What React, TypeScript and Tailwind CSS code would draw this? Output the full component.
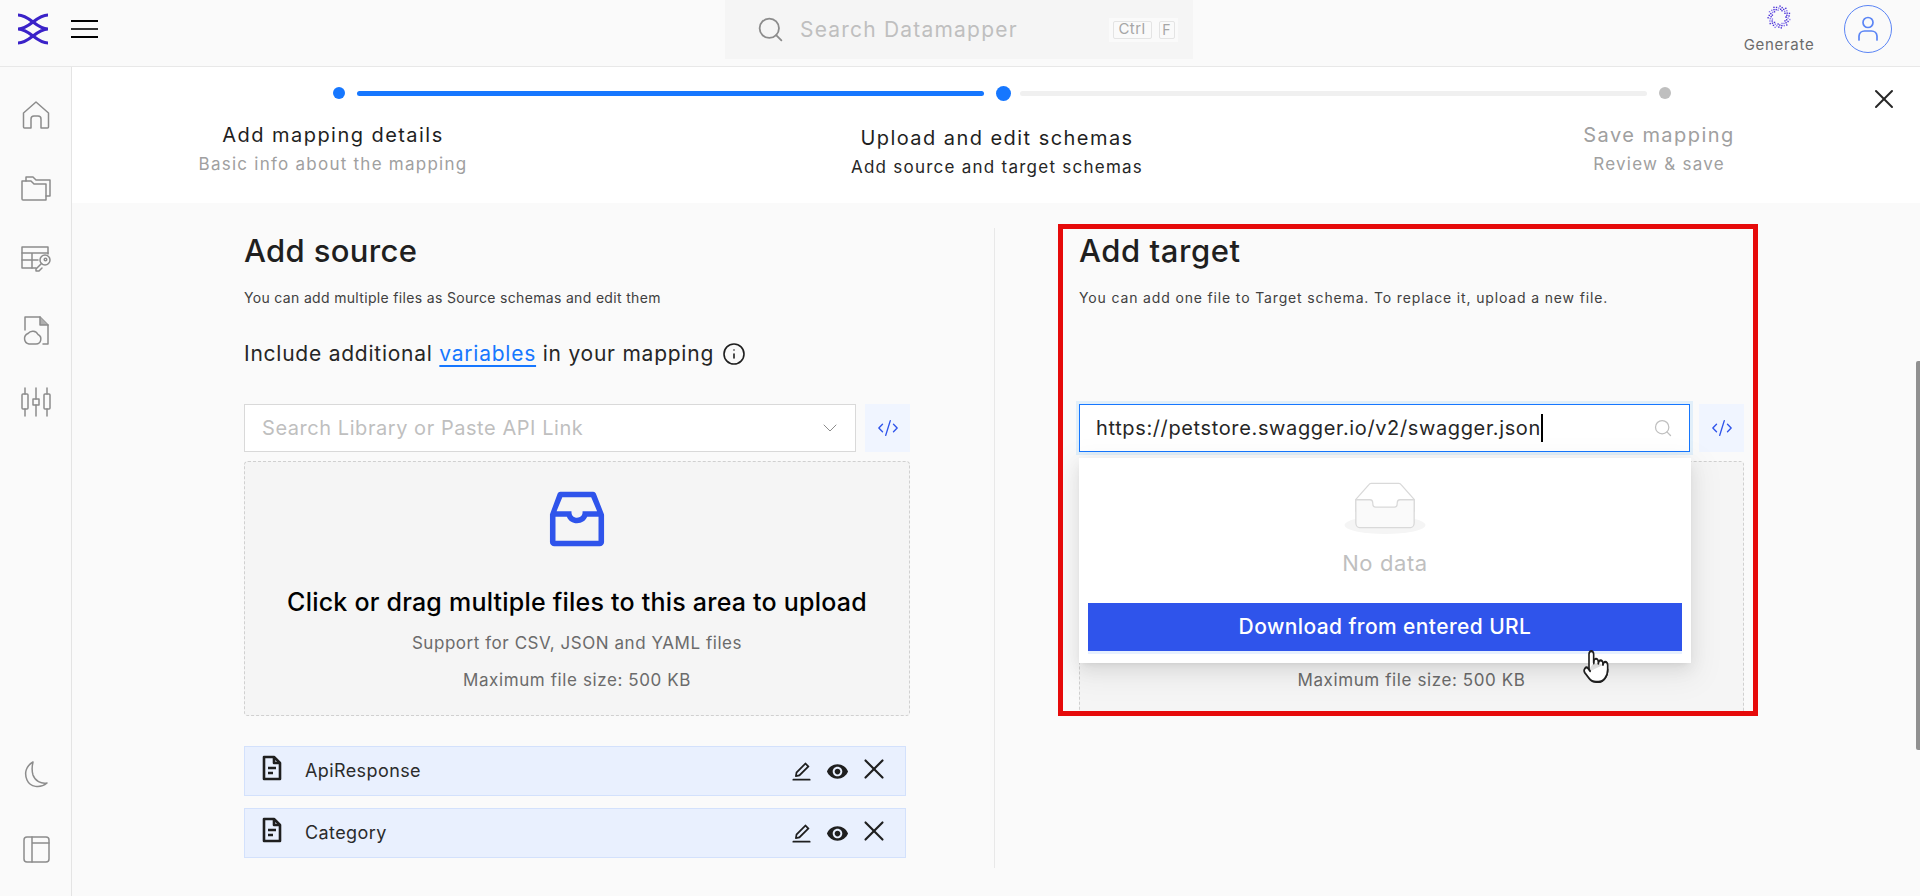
import React from "react";
import { Search, X, ChevronDown, Info, Pointer, CodeXml } from "lucide-react";
import { AiOutlineInbox, AiOutlineEdit } from "react-icons/ai";
import { MdRemoveRedEye } from "react-icons/md";

const Logo = () => (
  <svg width="32" height="32" viewBox="0 0 32 32" fill="none" stroke="#3a22c8" strokeWidth="3">
    <path d="M1 2 C13 2 19 16 31 16 C19 16 13 30 1 30" />
    <path d="M31 2 C19 2 13 16 1 16 C13 16 19 30 31 30" />
  </svg>
);

const GenerateIcon = () => {
  const dots: React.ReactElement[] = [];
  for (let i = 0; i < 56; i++) {
    const a = i * 2.399;
    const r = 7 + ((i * 7) % 5);
    dots.push(
      <rect key={i} x={12 + Math.cos(a) * r - 0.6} y={12 + Math.sin(a) * r - 0.6} width="1.4" height="1.4" fill={i % 3 === 0 ? "#8b7cf0" : "#4b32d8"} />
    );
  }
  return <svg width="24" height="24" viewBox="0 0 24 24">{dots}</svg>;
};

const navStroke = { fill: "none", stroke: "#8c8c8c", strokeWidth: 1.5, strokeLinejoin: "round" as const, strokeLinecap: "round" as const };

const HomeIcon = () => (
  <svg width="32" height="32" viewBox="0 0 32 32" {...navStroke}>
    <path d="M3.5 14 L16 3 L28.5 14 V28 A1 1 0 0 1 27.5 29 H21 V20 A3 3 0 0 0 18 17 H14 A3 3 0 0 0 11 20 V29 H4.5 A1 1 0 0 1 3.5 28 Z" />
  </svg>
);
const FolderIcon = () => (
  <svg width="32" height="32" viewBox="0 0 32 32" {...navStroke}>
    <path d="M6 10 L6 6 L13 6 L16 9 L30 9 V25 H26" />
    <path d="M2 10 H11 L14 13 H26 V29 H3 A1 1 0 0 1 2 28 Z" />
  </svg>
);
const TableKeyIcon = () => (
  <svg width="32" height="32" viewBox="0 0 32 32" {...navStroke}>
    <path d="M16 26 H2 V5 H28 V12" />
    <path d="M2 11 H28 M2 18 H18 M12 11 V26" />
    <circle cx="25" cy="18" r="5" />
    <circle cx="25.5" cy="17.5" r="1.3" />
    <path d="M21.5 21.5 L16 27 V29 H19 L22 26" />
  </svg>
);
const DocCloudIcon = () => (
  <svg width="32" height="32" viewBox="0 0 32 32" {...navStroke}>
    <path d="M5 16 V3 H20 L28 11 V30 H23" />
    <path d="M20 3 V11 H28" fill="#b0b0b0" />
    <path d="M9 30 H16 A5 5 0 0 0 18 20.5 A6 6 0 0 0 8 19.5 A5.5 5.5 0 0 0 9 30 Z" />
  </svg>
);
const SlidersIcon = () => (
  <svg width="32" height="32" viewBox="0 0 32 32" {...navStroke}>
    <rect x="2" y="8" width="6" height="15" rx="1" />
    <path d="M5 2 V8 M5 23 V30" />
    <rect x="13" y="13" width="6" height="6" />
    <path d="M16 2 V13 M16 19 V30" />
    <rect x="24" y="8" width="6" height="15" rx="1" />
    <path d="M27 2 V8 M27 23 V30" />
  </svg>
);
const MoonIcon = () => (
  <svg width="32" height="32" viewBox="0 0 32 32" {...navStroke}>
    <path d="M13 3 C6 7 4 14 7 21 C10 28 20 30 27 24 C21 25 15 22 13 16 C11.5 11 12 7 13 3 Z" />
  </svg>
);
const LayoutIcon = () => (
  <svg width="32" height="32" viewBox="0 0 32 32" {...navStroke}>
    <rect x="4" y="4" width="25" height="25" rx="3" />
    <path d="M12 4 V29 M12 10 H29" />
  </svg>
);
const FileIcon = () => (
  <svg width="20" height="26" viewBox="0 0 20 26" fill="none" stroke="#1f1f1f" strokeWidth="2.6" strokeLinejoin="round" className="mb-[6px]">
    <path d="M2 2 H12 L18 8 V24 H2 Z" />
    <path d="M12 2 V8 H18" />
    <path d="M6 13 H14 M6 18 H11" />
  </svg>
);

const Step = ({ title, sub, className, titleClass, subClass }: { title: string; sub: string; className: string; titleClass: string; subClass: string }) => (
  <div className={`flex flex-col items-center w-[340px] ${className}`}>
    <div className={`text-[20px] leading-[26px] tracking-[1.45px] ${titleClass}`}>{title}</div>
    <div className={`text-[17px] leading-[24px] mt-[4px] tracking-[1.25px] ${subClass}`}>{sub}</div>
  </div>
);

const CodeBtn = () => (
  <div className="w-[45px] h-[48px] bg-[#f0f5ff] flex items-center justify-center text-[#2f54eb] shrink-0">
    <CodeXml size={22} strokeWidth={1.5} />
  </div>
);

const Dropzone = ({ covered }: { covered?: boolean }) => (
  <div className="mt-[9px] h-[255px] rounded-[4px] border border-dashed border-[#d0d0d0] bg-[#f5f5f5] flex flex-col items-center pt-[20px]">
    <AiOutlineInbox size={74} className={`text-[#2f54eb] ${covered ? "invisible" : ""}`} />
    <div className={`mt-[30px] text-[25px] leading-[32px] font-medium text-black tracking-[0.22px] ${covered ? "invisible" : ""}`}>Click or drag multiple files to this area to upload</div>
    <div className={`mt-[13px] text-[17px] leading-[24px] text-[#6b6b6b] tracking-[0.55px] ${covered ? "invisible" : ""}`}>Support for CSV, JSON and YAML files</div>
    <div className="mt-[13px] text-[17px] leading-[24px] text-[#6b6b6b] tracking-[0.6px]">Maximum file size: 500 KB</div>
  </div>
);

const FileRow = ({ name }: { name: string }) => (
  <div className="h-[50px] w-[662px] bg-[#e9f0fe] border border-[#d3e1fc] flex items-center pl-[17px] pr-[14px]">
    <FileIcon />
    <span className="ml-[23px] mb-[1px] text-[18px] text-[#2b2b2b] tracking-[0.4px]">{name}</span>
    <div className="ml-auto flex items-center">
      <AiOutlineEdit size={23} className="text-[#1f1f1f]" />
      <MdRemoveRedEye size={23} className="ml-[13px] text-[#1f1f1f]" />
      <X size={34} strokeWidth={1.5} className="ml-[8px] mb-[4px] text-[#1f1f1f]" />
    </div>
  </div>
);

export default function App() {
  return (
    <div className="relative w-[1920px] h-[896px] overflow-hidden bg-[#fafafa] font-['Inter',sans-serif]">
      {/* Top bar */}
      <header className="h-[67px] border-b border-[#e8e8e8] flex items-start relative">
        <div className="ml-[17px] mt-[13px]"><Logo /></div>
        <div className="ml-[22px] mt-[20px] flex flex-col gap-[6px] w-[27px]">
          <div className="h-[2px] bg-black" />
          <div className="h-[2px] bg-[#333]" />
          <div className="h-[2px] bg-black" />
        </div>
        <div className="ml-[627px] w-[468px] h-[59px] bg-[#f5f5f5] flex items-center pl-[31px]">
          <Search size={29} strokeWidth={1.5} className="text-[#8c8c8c]" />
          <span className="ml-[15px] text-[21px] text-[#bfbfbf] tracking-[1.2px]">Search Datamapper</span>
          <div className="ml-auto mr-[15px] h-[24px] w-[69px] bg-[#fafafa] flex items-center justify-center gap-[7px]">
            <span className="h-[18px] w-[39px] border border-[#e4e4e4] rounded-[2px] flex items-center justify-center text-[15px] text-[#a6a6a6] tracking-[0.4px]">Ctrl</span>
            <span className="h-[18px] w-[16px] border border-[#e4e4e4] rounded-[2px] flex items-center justify-center text-[14px] text-[#a6a6a6]">F</span>
          </div>
        </div>
        <div className="ml-[548px] w-[76px] flex flex-col items-center mt-[5px]">
          <GenerateIcon />
          <span className="text-[15px] leading-[20px] mt-[6px] text-[#6b6b6b] tracking-[0.7px]">Generate</span>
        </div>
        <div className="ml-[27px] mt-[5px] w-[48px] h-[48px] rounded-full border-[1.5px] border-[#5b85f5] flex items-center justify-center">
          <svg width="22" height="26" viewBox="0 0 22 26" fill="none" stroke="#5b85f5" strokeWidth="1.7" strokeLinecap="round">
            <circle cx="11" cy="6.5" r="5" />
            <path d="M2 24 V20 A5.5 5.5 0 0 1 7.5 15 H14.5 A5.5 5.5 0 0 1 20 20 V24" />
          </svg>
        </div>
      </header>

      <div className="flex h-[829px]">
        {/* Sidebar */}
        <aside className="w-[72px] border-r border-[#e4e4e4] flex flex-col items-center pt-[12px] pb-[29px] shrink-0">
          {[HomeIcon, FolderIcon, TableKeyIcon, DocCloudIcon, SlidersIcon].map((I, i) => (
            <div key={i} className="h-[71.7px] w-full flex items-center justify-center"><I /></div>
          ))}
          <div className="mt-auto h-[37px] flex items-center justify-center"><MoonIcon /></div>
          <div className="mt-[37px] h-[37px] flex items-center justify-center"><LayoutIcon /></div>
        </aside>

        <main className="flex-1 min-w-0">
          {/* Stepper */}
          <section className="relative h-[136px] bg-white">
            <div className="flex items-center h-[33px] pt-[19px] pl-[261px]">
              <span className="w-[12px] h-[12px] rounded-full bg-[#1677ff]" />
              <span className="ml-[12px] w-[627px] h-[5px] rounded-full bg-[#1677ff]" />
              <span className="ml-[12px] w-[15px] h-[15px] rounded-full bg-[#1677ff]" />
              <span className="ml-[9px] w-[627px] h-[5px] rounded-full bg-[#f0f0f0]" />
              <span className="ml-[12px] w-[12px] h-[12px] rounded-full bg-[#bfbfbf]" />
            </div>
            <div className="flex pl-[91px]">
              <Step className="pt-[22px]" title="Add mapping details" sub="Basic info about the mapping" titleClass="text-[#1f1f1f]" subClass="text-[#a0a0a0]" />
              <Step className="ml-[324px] pt-[25px]" title="Upload and edit schemas" sub="Add source and target schemas" titleClass="text-[#1f1f1f]" subClass="text-[#262626]" />
              <Step className="ml-[322px] pt-[22px]" title="Save mapping" sub="Review & save" titleClass="text-[#a0a0a0]" subClass="text-[#a0a0a0]" />
            </div>
            <X size={32} strokeWidth={1.5} className="absolute right-[20px] top-[16px] text-[#262626]" />
          </section>

          {/* Columns */}
          <section className="flex pt-[25px] pl-[172px]">
            <div className="w-[666px] shrink-0">
              <h2 className="text-[31px] leading-[46px] font-medium text-[#1f1f1f] tracking-[0.35px]">Add source</h2>
              <p className="mt-[14px] text-[14px] leading-[20px] text-[#404040] tracking-[0.33px]">You can add multiple files as Source schemas and edit them</p>
              <div className="mt-[31px] h-[30px] flex items-center text-[21px] text-[#262626] tracking-[0.76px]">
                Include additional&nbsp;<span className="text-[#1677ff] underline underline-offset-[4px]">variables</span>&nbsp;in your mapping
                <Info size={24} strokeWidth={1.6} className="ml-[8px] text-[#1f1f1f]" />
              </div>
              <div className="mt-[35px] flex gap-[9px]">
                <div className="flex-1 h-[48px] bg-white border border-[#d9d9d9] flex items-center pl-[17px] pr-[13px]">
                  <span className="text-[20px] text-[#bfbfbf] tracking-[0.55px]">Search Library or Paste API Link</span>
                  <ChevronDown size={24} strokeWidth={1} className="ml-auto text-[#8c8c8c]" />
                </div>
                <CodeBtn />
              </div>
              <Dropzone />
              <div className="mt-[30px] flex flex-col gap-[12px]">
                <FileRow name="ApiResponse" />
                <FileRow name="Category" />
              </div>
            </div>

            <div className="ml-[84px] w-px h-[640px] bg-[#e8e8e8] shrink-0" />

            <div className="relative ml-[84px] w-[665px] shrink-0">
              <h2 className="text-[31px] leading-[46px] font-medium text-[#1f1f1f] tracking-[0.55px]">Add target</h2>
              <p className="mt-[14px] text-[14px] leading-[20px] text-[#404040] tracking-[0.85px]">You can add one file to Target schema. To replace it, upload a new file.</p>
              <div className="mt-[96px] flex gap-[9px] relative">
                <div className="w-[612px] h-[48px] bg-white border border-[#1677ff] shadow-[0_0_0_3px_rgba(5,145,255,0.1)] flex items-center pl-[16px] pr-[16px]">
                  <span className="text-[20px] text-[#262626] tracking-[0.63px]">https://petstore.swagger.io/v2/swagger.json</span>
                  <span className="w-[2px] h-[28px] bg-black" />
                  <Search size={20} strokeWidth={1.5} className="ml-auto text-[#bfbfbf]" />
                </div>
                <CodeBtn />
                <div className="absolute left-0 top-[54px] w-[612px] h-[205px] bg-white z-10 flex flex-col items-center shadow-[0_3px_6px_-4px_rgba(0,0,0,0.12),0_6px_16px_0_rgba(0,0,0,0.08),0_9px_28px_8px_rgba(0,0,0,0.05)]">
                  <svg width="82" height="52" viewBox="0 0 64 41" className="mt-[24px]">
                    <g transform="translate(0 1)" fill="none" fillRule="evenodd">
                      <ellipse fill="#f5f5f5" cx="32" cy="33" rx="32" ry="7" />
                      <g fillRule="nonzero" stroke="#d9d9d9">
                        <path d="M55 12.76L44.854 1.258C44.367.474 43.656 0 42.907 0H21.093c-.749 0-1.46.474-1.947 1.257L9 12.761V22h46v-9.24z" />
                        <path d="M41.613 15.931c0-1.605.994-2.93 2.227-2.931H55v18.137C55 33.26 53.68 35 52.05 35h-40.1C10.32 35 9 33.259 9 31.137V13h11.16c1.233 0 2.227 1.323 2.227 2.928v.022c0 1.605 1.005 2.901 2.237 2.901h14.752c1.232 0 2.237-1.308 2.237-2.913v-.007z" fill="#fafafa" />
                      </g>
                    </g>
                  </svg>
                  <div className="mt-[15px] text-[22px] leading-[28px] text-[#bfbfbf] tracking-[0.6px]">No data</div>
                  <div className="mt-[26px] w-[594px] h-[51px] border-b-[3px] border-[#e6f0ff]">
                    <div className="h-[48px] bg-[#2f54eb] flex items-center justify-center text-white text-[21px] font-medium tracking-[0.4px]">Download from entered URL</div>
                  </div>
                </div>
              </div>
              <Dropzone covered />
              <Pointer strokeWidth={1.4} fill="white" preserveAspectRatio="none" className="absolute left-[503px] top-[420px] w-[28px] h-[37px] text-[#1f1f1f] z-20" />
              <div className="absolute left-[-21px] top-[-4px] w-[700px] h-[492px] border-[5px] border-[#e60a0a] z-30 pointer-events-none" />
            </div>
          </section>
        </main>
      </div>

      {/* Overlay scrollbar */}
      <div className="absolute right-0 top-[361px] w-[4px] h-[389px] rounded-l-[2px] bg-[#909090]" />
    </div>
  );
}
